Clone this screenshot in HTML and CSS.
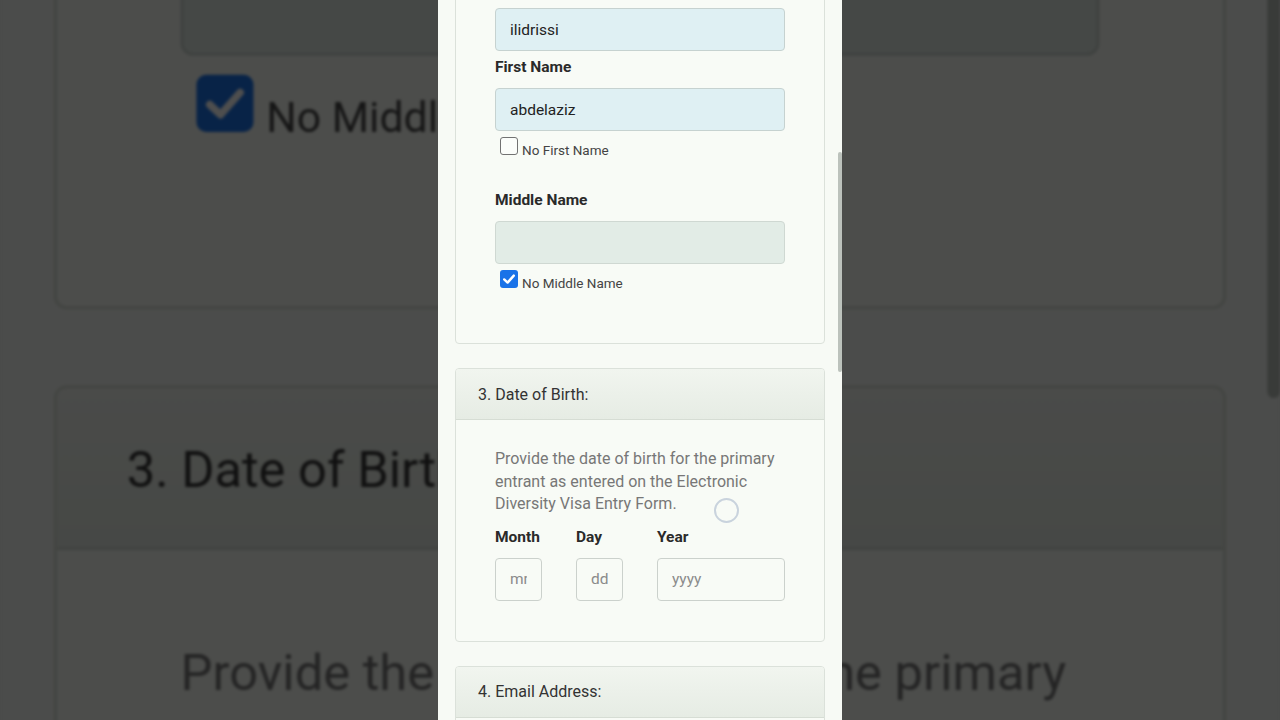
FILE: index.html
```html
<!DOCTYPE html>
<html lang="en">
<head>
<meta charset="utf-8">
<title>Electronic Diversity Visa Entry - Status Check</title>
<link rel="stylesheet" href="styles.css">
</head>
<body>
<div class="stage">
  <div class="backdrop" aria-hidden="true">
    <div class="phone">
      <div class="scroll">
        <section class="card">
          <div class="card-head">2. Name:</div>
          <div class="card-body">
            <div class="field">
              <div class="lbl">Last/Family Name</div>
              <div class="txt filled">ilidrissi</div>
            </div>
            <div class="field">
              <div class="lbl">First Name</div>
              <div class="txt filled">abdelaziz</div>
              <div class="check"><span class="box"></span><span class="check-text">No First Name</span></div>
            </div>
            <div class="field">
              <div class="lbl">Middle Name</div>
              <div class="txt disabled"></div>
              <div class="check"><span class="box on"><svg viewBox="0 0 18 18" width="18" height="18"><path d="M4.2 9.4 L7.6 12.6 L13.8 5.6" fill="none" stroke="#fff" stroke-width="2.4" stroke-linecap="round" stroke-linejoin="round"/></svg></span><span class="check-text">No Middle Name</span></div>
            </div>
          </div>
        </section>
        <section class="card">
          <div class="card-head">3. Date of Birth:</div>
          <div class="card-body">
            <p class="hint">Provide the date of birth for the primary entrant as entered on the Electronic Diversity Visa Entry Form.</p>
            <div class="date-row">
              <div class="date-col mm"><div class="lbl">Month</div><div class="txt empty">mm</div></div>
              <div class="date-col dd"><div class="lbl">Day</div><div class="txt empty">dd</div></div>
              <div class="date-col yy"><div class="lbl">Year</div><div class="txt empty">yyyy</div></div>
            </div>
          </div>
        </section>
        <section class="card">
          <div class="card-head">4. Email Address:</div>
          <div class="card-body">
            <div class="field">
              <div class="lbl">Email Address</div>
              <div class="txt"></div>
            </div>
          </div>
        </section>
      </div>
      <span class="scrollbar"></span>
    </div>
  </div>

  <div class="phone main">
    <div class="scroll">
      <section class="card">
        <div class="card-head">2. Name:</div>
        <div class="card-body">
          <div class="field">
            <label class="lbl" for="last">Last/Family Name</label>
            <input class="txt filled" id="last" type="text" value="ilidrissi">
          </div>
          <div class="field">
            <label class="lbl" for="first">First Name</label>
            <input class="txt filled" id="first" type="text" value="abdelaziz">
            <label class="check"><span class="box"></span><span class="check-text">No First Name</span></label>
          </div>
          <div class="field">
            <label class="lbl" for="middle">Middle Name</label>
            <input class="txt disabled" id="middle" type="text" disabled>
            <label class="check"><span class="box on"><svg viewBox="0 0 18 18" width="18" height="18"><path d="M4.2 9.4 L7.6 12.6 L13.8 5.6" fill="none" stroke="#fff" stroke-width="2.4" stroke-linecap="round" stroke-linejoin="round"/></svg></span><span class="check-text">No Middle Name</span></label>
          </div>
        </div>
      </section>
      <section class="card">
        <div class="card-head">3. Date of Birth:</div>
        <div class="card-body">
          <p class="hint">Provide the date of birth for the primary entrant as entered on the Electronic Diversity Visa Entry Form.</p>
          <div class="date-row">
            <div class="date-col mm"><label class="lbl" for="mm">Month</label><input class="txt" id="mm" type="text" placeholder="mm"></div>
            <div class="date-col dd"><label class="lbl" for="dd">Day</label><input class="txt" id="dd" type="text" placeholder="dd"></div>
            <div class="date-col yy"><label class="lbl" for="yy">Year</label><input class="txt" id="yy" type="text" placeholder="yyyy"></div>
          </div>
        </div>
      </section>
      <section class="card">
        <div class="card-head">4. Email Address:</div>
        <div class="card-body">
          <div class="field">
            <label class="lbl" for="email">Email Address</label>
            <input class="txt" id="email" type="text">
          </div>
        </div>
      </section>
    </div>
    <span class="scrollbar"></span>
    <span class="touch"></span>
  </div>
</div>
</body>
</html>
```

FILE: styles.css
```css
* { box-sizing: border-box; }

html, body {
  margin: 0;
  padding: 0;
  background: #4b4b49;
}

.stage {
  position: relative;
  width: 1280px;
  height: 720px;
  overflow: hidden;
  display: flex;
  justify-content: center;
  background: #4b4b49;
  font-family: Roboto, "Noto Sans", "Liberation Sans", sans-serif;
}

/* enlarged, dimmed copy of the screen behind the video frame */
.backdrop {
  position: absolute;
  inset: 0;
  display: flex;
  justify-content: center;
  filter: brightness(0.305) blur(1.4px);
  pointer-events: none;
}

.backdrop .phone {
  transform: scale(3.1683);
  transform-origin: 50% 50%;
}

.phone {
  position: relative;
  width: 404px;
  height: 720px;
  flex: none;
  overflow: hidden;
  background: #f7faf5;
  padding: 0 17px;
}

.main { z-index: 1; }

.scroll {
  margin-top: -103px;   /* page scroll position */
}

.card {
  border: 1px solid #dbe1da;
  border-radius: 4px;
  background: #f8fbf6;
  overflow: hidden;
}

.card + .card { margin-top: 24px; }

.card-head {
  height: 51px;
  padding: 0 22px;
  display: flex;
  align-items: center;
  font-size: 16px;
  color: #333;
  background: linear-gradient(#f1f5ef, #e6ece4);
  border-bottom: 1px solid #d6ddd4;
}

.card-body {
  padding: 28px 39px 20px;
}

.field { margin-bottom: 6px; }

.lbl {
  display: block;
  font-size: 15.5px;
  line-height: 20px;
  font-weight: 700;
  color: #2a2a2a;
  margin-bottom: 11px;
}

.txt {
  display: block;
  width: 100%;
  height: 43px;
  margin: 0;
  padding: 0 14px;
  font-family: inherit;
  font-size: 15.5px;
  line-height: 41px;
  color: #222;
  background: #f8fbf6;
  border: 1px solid #cbd1cc;
  border-radius: 4px;
  outline: none;
  overflow: hidden;
  white-space: nowrap;
}

.txt::placeholder { color: #8b8b8b; }
.txt.empty { color: #8b8b8b; }

.txt.filled {
  background: #dff0f3;
  border-color: #c6d2d0;
}

.txt.disabled {
  background: #e2ece6;
  border-color: #cfd8d2;
}

.check {
  display: flex;
  align-items: flex-end;
  height: 18px;
  margin: 6px 0 35px 5px;
}

.box {
  width: 18px;
  height: 18px;
  flex: none;
  border: 1.5px solid #727272;
  border-radius: 3px;
  background: #fbfdfa;
  display: flex;
  align-items: center;
  justify-content: center;
}

.box.on {
  border: none;
  background: #1a73e8;
}

.box svg { display: block; }

.check-text {
  margin-left: 4px;
  font-size: 13.5px;
  line-height: 13px;
  color: #444;
  margin-bottom: -2px;
}

.hint {
  margin: 0 0 11px;
  font-size: 16px;
  line-height: 22.5px;
  color: #777;
}

.date-row {
  display: flex;
  gap: 34px;
  margin-bottom: 20px;
}

.date-col.mm, .date-col.dd { width: 47px; }
.date-col.yy { width: 128px; }

.scrollbar {
  position: absolute;
  right: 0;
  top: 152px;
  width: 4px;
  height: 220px;
  background: #bcc2bc;
  border-radius: 2px;
}

.touch {
  position: absolute;
  left: 276px;
  top: 498px;
  width: 25px;
  height: 25px;
  border: 2px solid #c9d3dd;
  border-radius: 50%;
}
```
